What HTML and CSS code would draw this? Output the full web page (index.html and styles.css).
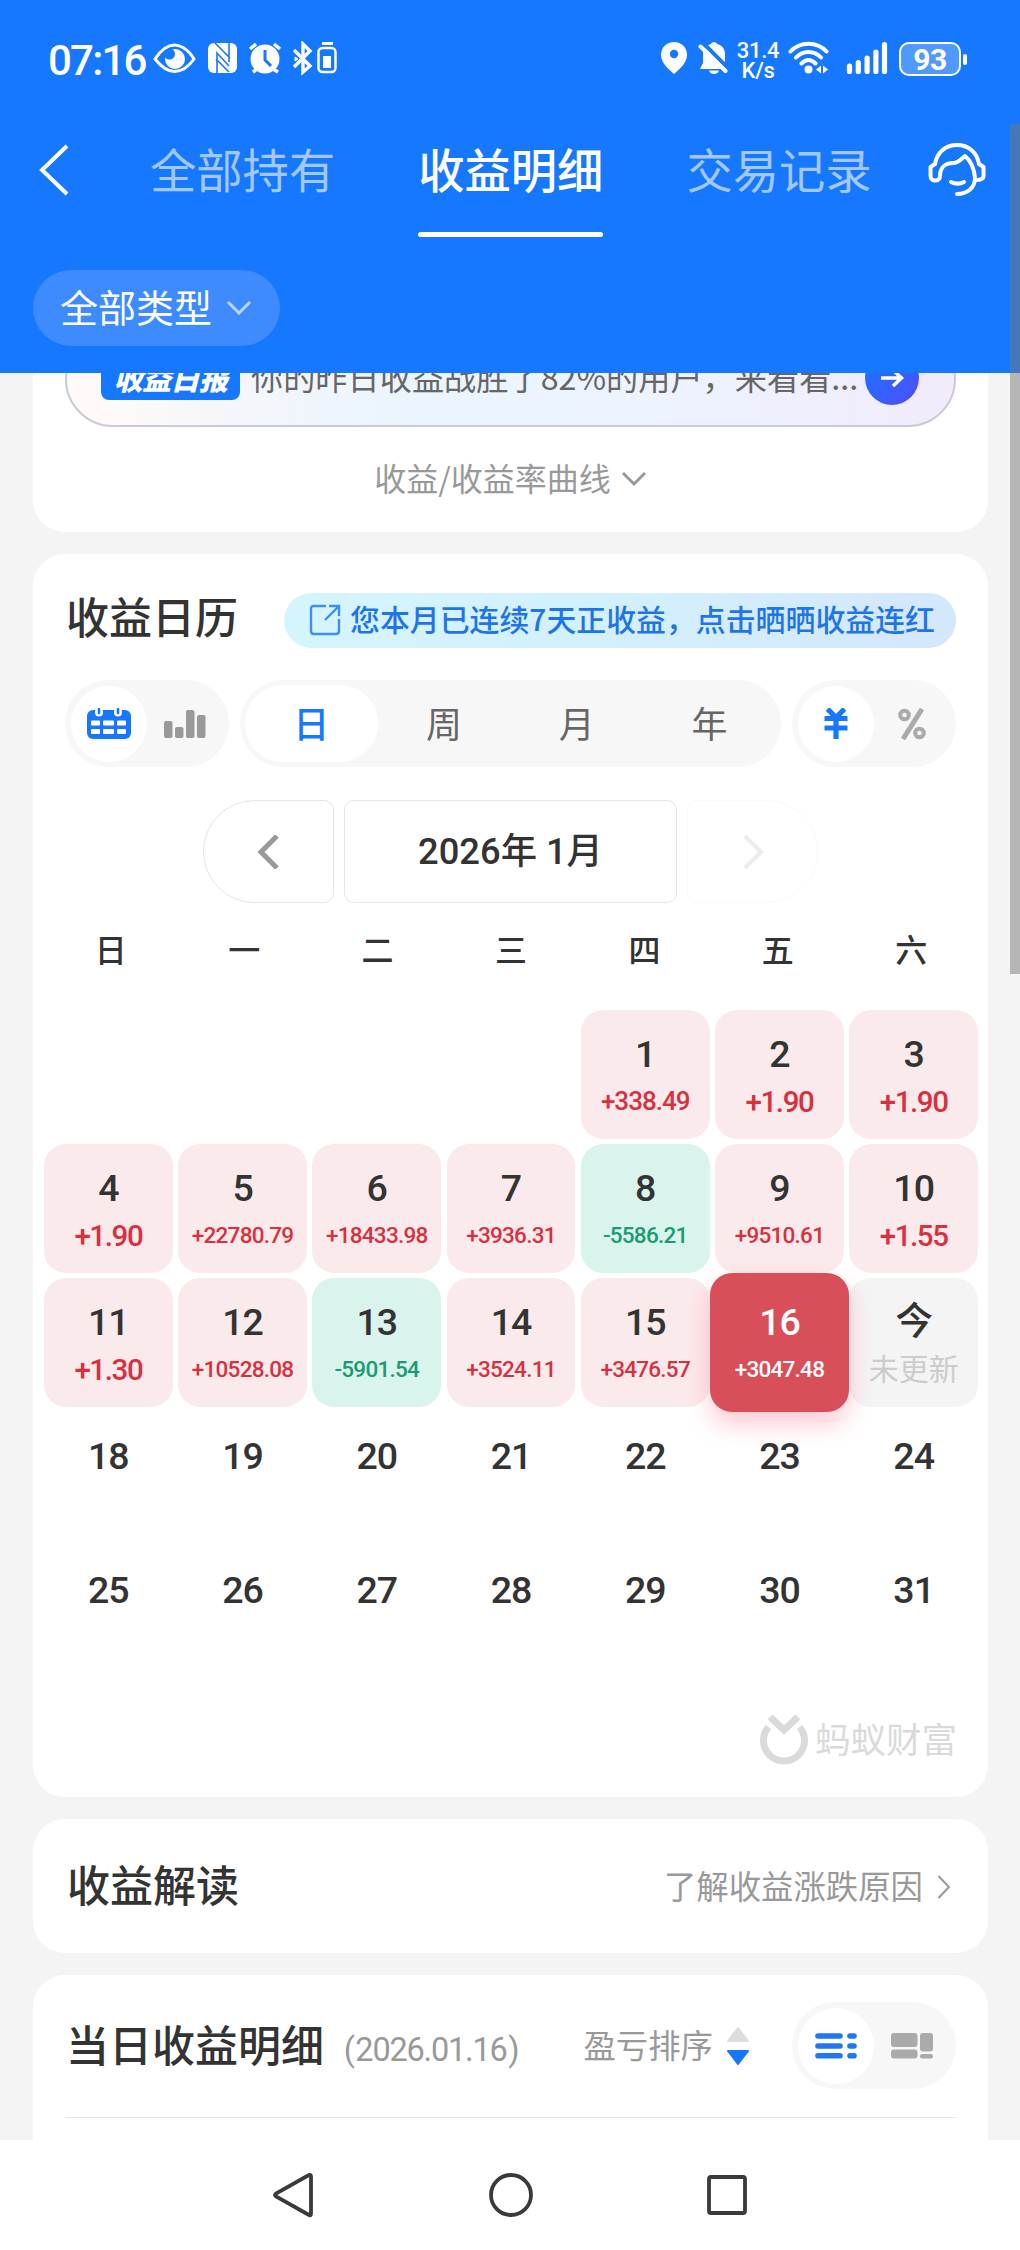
FILE: index.html
```html
<!DOCTYPE html>
<html lang="zh-CN">
<head>
<meta charset="utf-8">
<title>收益明细</title>
<link rel="stylesheet" href="styles.css">
</head>
<body>
<div class="screen">
  <header class="header">
    <div class="status">
      <span class="clock">07:16</span>
      <svg class="status-left" width="190" height="36" viewBox="0 0 190 36" fill="none" stroke="#fff">
        <path d="M2 18C10 6 18 4 21.500 4S34 6 41 18C34 28 26 30.500 21.500 30.500S10 28 2 18Z" stroke-width="3"/>
        <circle cx="22" cy="18" r="10" fill="#fff" stroke="none"/><circle cx="16.500" cy="13" r="5.500" fill="#1677ff" stroke="none"/>
        <rect x="55" y="2" width="29" height="30" rx="6" fill="#fff" stroke="none"/>
        <path d="M62 2L77 17M64 32V12L76 25M63 18L76 31M76 2V21" stroke="#1677ff" stroke-width="1.600"/>
        <circle cx="112" cy="18" r="14.500" fill="#fff" stroke="none"/>
        <path d="M97 8L103 3M121 3L127 8M104 28L100 31M120 28L125 31" stroke-width="3.500"/>
        <path d="M112 9V19L118 25" stroke="#1677ff" stroke-width="3"/>
        <path d="M141 9L157 25L150 31V3L157 10L141 26" stroke-width="3.400"/>
        <path d="M142 16l3 2l-3 2z" fill="#fff" stroke-width="1"/>
        <path d="M169 2.500H180" stroke-width="3"/><rect x="165.500" y="7" width="17" height="24" rx="4" stroke-width="2.500"/><rect x="170" y="15" width="8" height="12" fill="#fff" stroke="none"/>
      </svg>
      <svg class="status-mid" width="68" height="36" viewBox="0 0 68 36">
        <path d="M14 1C6.500 1 1 6.500 1 14C1 21 7 27 14 33C21 27 27 21 27 14C27 6.500 21.500 1 14 1Z" fill="#fff"/><circle cx="14" cy="13" r="4.200" fill="#1677ff"/>
        <path d="M43 22V13C43 7 47 4 51 3C51 .5 57 .5 57 3C62 4 65 8 65 13V24L67 28H40Z" fill="#fff"/><path d="M49 29.500H59C58 34 50 34 49 29.500Z" fill="#fff"/>
        <path d="M43 2L69 28" stroke="#1677ff" stroke-width="4"/><path d="M40.500 5.500L65.500 30" stroke="#fff" stroke-width="4" stroke-linecap="round"/>
      </svg>
      <span class="speed"><span>31.4</span><span>K/s</span></span>
      <svg class="status-right" width="100" height="36" viewBox="0 0 100 36" fill="none" stroke="#fff" stroke-linecap="round">
        <path d="M2.500 10.500C12 0 29 0 38.500 10.500M8 16.500C15 9 26 9 33 16.500M13.500 22.500C18 18 23 18 27.500 22.500" stroke-width="4"/>
        <circle cx="20.500" cy="28.500" r="4" fill="#fff" stroke="none"/><path d="M33 24.500V32.500L28 28.500ZM35 24.500V32.500L40 28.500Z" fill="#fff" stroke="none"/>
        <path d="M61.500 25V30.500M70.300 21.500V30.500M79.100 17V30.500M87.900 11V30.500M96.500 3.500V30.500" stroke-width="5.200"/>
      </svg>
      <span class="battery">93</span><i class="battery-tip"></i>
    </div>
    <nav class="tabs">
      <svg class="back" width="34" height="54" viewBox="0 0 34 54"><path d="M31 3L6 27L31 51" fill="none" stroke="#fff" stroke-width="4"/></svg>
      <span class="tab tab-first">全部持有</span>
      <span class="tab tab-active">收益明细</span>
      <span class="tab">交易记录</span>
      <svg class="service" width="58" height="56" viewBox="0 0 58 56" fill="none" stroke="#fff" stroke-width="4" stroke-linejoin="round" stroke-linecap="round">
        <path d="M7 22C9 10 18 3 29 3S49 10 51 22"/>
        <path d="M7 22L2.500 25V34C2.500 40 12 40 12 34C12 25 18 21 25 21C31 21 33 17 37 14C43 19 46 25 47 36C47 46 39 52 29 52"/>
        <path d="M51 22L55.500 25V34C55.500 37 52 38 47 38"/>
        <path d="M23 40C27 42 32 42 36 40"/>
      </svg>
    </nav>
    <div class="type-pill">全部类型<svg width="26" height="18" viewBox="0 0 26 18"><path d="M2 3L13 14L24 3" fill="none" stroke="#b9d6ff" stroke-width="3"/></svg></div>
  </header>

  <main class="content">
    <section class="card summary">
      <div class="banner">
        <span class="banner-tag">收益日报</span>
        <span class="banner-text">你的昨日收益战胜了82%的用户，来看看...</span>
        <span class="banner-go"><svg width="28" height="24" viewBox="0 0 28 24"><path d="M3 12H23M15 4L23.500 12L15 20" fill="none" stroke="#fff" stroke-width="3.500"/></svg></span>
      </div>
      <div class="curve-link">收益/收益率曲线<svg width="26" height="18" viewBox="0 0 26 18"><path d="M2 3L13 14L24 3" fill="none" stroke="#999" stroke-width="3"/></svg></div>
    </section>

    <section class="card calendar">
      <div class="calendar-head">
        <h2 class="title">收益日历</h2>
        <div class="streak">
          <svg width="32" height="32" viewBox="0 0 32 32" fill="none" stroke="#3f8df5" stroke-width="2.400"><path d="M17 2H5Q2 2 2 5V27Q2 30 5 30H27Q30 30 30 27V15M20 2H30V12M30 2L16 16"/></svg>
          <span>您本月已连续7天正收益，点击晒晒收益连红</span>
        </div>
      </div>
      <div class="controls">
        <div class="toggle">
          <span class="toggle-item on"><svg width="44" height="32" viewBox="0 0 44 32"><rect x="0" y="2" width="44" height="29" rx="6" fill="#1677ff"/><g fill="#fff"><rect x="4" y="12.500" width="9" height="5" rx="1"/><rect x="16" y="12.500" width="11" height="5" rx="1"/><rect x="30" y="12.500" width="9" height="5" rx="1"/><rect x="4" y="21" width="9" height="5" rx="1"/><rect x="16" y="21" width="11" height="5" rx="1"/><rect x="30" y="21" width="9" height="5" rx="1"/><rect x="8" y="0" width="8" height="8.500" rx="4"/><rect x="27" y="0" width="8" height="8.500" rx="4"/></g><path d="M12 1V5M31 1V5" stroke="#1677ff" stroke-width="2.500" stroke-linecap="round"/></svg></span>
          <span class="toggle-item"><svg width="42" height="28" viewBox="0 0 42 28" fill="#999"><rect x="0" y="11" width="8.500" height="17" rx="2"/><rect x="11" y="17" width="8.500" height="11" rx="2"/><rect x="22" y="0" width="8.500" height="28" rx="2"/><rect x="33" y="5" width="8.500" height="23" rx="2"/></svg></span>
        </div>
        <div class="period"><span class="on">日</span><span>周</span><span>月</span><span>年</span></div>
        <div class="toggle">
          <span class="toggle-item on"><svg width="24" height="32" viewBox="0 0 24 32" fill="none" stroke="#1677ff" stroke-width="5.200"><path d="M3.500 1L12 9.500L20.500 1M12 8V31M.5 10.500H23.500M.5 20H23.500"/></svg></span>
          <span class="toggle-item"><svg width="28" height="32" viewBox="0 0 28 32" fill="none" stroke="#aaa"><circle cx="6.500" cy="7" r="4.300" stroke-width="4"/><circle cx="21.500" cy="25" r="4.300" stroke-width="4"/><path d="M24 1L5 31" stroke-width="5"/></svg></span>
        </div>
      </div>
      <div class="month-nav">
        <span class="month-btn prev"><svg width="22" height="34" viewBox="0 0 22 34"><path d="M20 1L4 17L20 33" fill="none" stroke="#999" stroke-width="5"/></svg></span>
        <span class="month">2026年 1月</span>
        <span class="month-btn next"><svg width="22" height="34" viewBox="0 0 22 34"><path d="M2 1L18 17L2 33" fill="none" stroke="#ececec" stroke-width="4"/></svg></span>
      </div>
      <div class="weekdays"><span>日</span><span>一</span><span>二</span><span>三</span><span>四</span><span>五</span><span>六</span></div>
      <div class="days">
        <div class="day up first"><b>1</b><span class="mid">+338.49</span></div>
        <div class="day up"><b>2</b><span class="big">+1.90</span></div>
        <div class="day up"><b>3</b><span class="big">+1.90</span></div>
        <div class="day up"><b>4</b><span class="big">+1.90</span></div>
        <div class="day up"><b>5</b><span>+22780.79</span></div>
        <div class="day up"><b>6</b><span>+18433.98</span></div>
        <div class="day up"><b>7</b><span>+3936.31</span></div>
        <div class="day down"><b>8</b><span>-5586.21</span></div>
        <div class="day up"><b>9</b><span>+9510.61</span></div>
        <div class="day up"><b>10</b><span class="big">+1.55</span></div>
        <div class="day up"><b>11</b><span class="big">+1.30</span></div>
        <div class="day up"><b>12</b><span>+10528.08</span></div>
        <div class="day down"><b>13</b><span>-5901.54</span></div>
        <div class="day up"><b>14</b><span>+3524.11</span></div>
        <div class="day up"><b>15</b><span>+3476.57</span></div>
        <div class="day selected"><b>16</b><span>+3047.48</span></div>
        <div class="day today"><b>今</b><span>未更新</span></div>
        <div class="day"><b>18</b></div><div class="day"><b>19</b></div><div class="day"><b>20</b></div><div class="day"><b>21</b></div><div class="day"><b>22</b></div><div class="day"><b>23</b></div><div class="day"><b>24</b></div>
        <div class="day"><b>25</b></div><div class="day"><b>26</b></div><div class="day"><b>27</b></div><div class="day"><b>28</b></div><div class="day"><b>29</b></div><div class="day"><b>30</b></div><div class="day"><b>31</b></div>
      </div>
      <div class="brand">
        <svg width="48" height="50" viewBox="0 0 48 50" fill="none" stroke="#dadada"><path d="M8.500 12A20.500 20.500 0 1 0 39.500 12" stroke-width="7"/><path d="M10 2L24 15L38 2" stroke-width="7"/></svg>
        <span>蚂蚁财富</span>
      </div>
    </section>

    <section class="card insight">
      <h2 class="title">收益解读</h2>
      <span class="more">了解收益涨跌原因<svg width="14" height="24" viewBox="0 0 14 24"><path d="M1.500 1L12 12L1.500 23" fill="none" stroke="#999" stroke-width="2"/></svg></span>
    </section>

    <section class="card detail">
      <div class="detail-head">
        <h2 class="title">当日收益明细</h2>
        <span class="date"><i>(</i>2026.01.16<i>)</i></span>
        <span class="sort">盈亏排序</span>
        <svg class="sort-icon" width="22" height="38" viewBox="0 0 22 38"><path d="M11 1L21 14H1Z" fill="#ddd" stroke="#ddd" stroke-width="2" stroke-linejoin="round"/><path d="M11 37L21 24H1Z" fill="#1677ff" stroke="#1677ff" stroke-width="2" stroke-linejoin="round"/></svg>
        <div class="toggle">
          <span class="toggle-item on"><svg width="42" height="26" viewBox="0 0 42 26" stroke="#1f78f0" stroke-width="5.600" stroke-linecap="round"><path d="M3 3H25M35 3H39M3 13H25M35 13H39M3 22.800H25M35 22.800H39"/></svg></span>
          <span class="toggle-item"><svg width="42" height="26" viewBox="0 0 42 26" fill="#aaa"><rect x="0" y="0" width="26.500" height="14" rx="3"/><rect x="29" y="0" width="13" height="18.500" rx="3"/><rect x="0" y="16.500" width="26.500" height="9" rx="3"/><rect x="29" y="21" width="13" height="4.500" rx="2.200"/></svg></span>
        </div>
      </div>
    </section>
  </main>

  <footer class="system-nav">
    <svg width="44" height="48" viewBox="0 0 44 48"><path d="M38.500 4Q40 4 40 5.500V42.500Q40 45 38 44L5 25.500Q3 24 5 22.500L37 4.500Z" fill="none" stroke="#3a3a3a" stroke-width="3.800"/></svg>
    <svg width="46" height="46" viewBox="0 0 46 46"><circle cx="23" cy="23" r="20" fill="none" stroke="#3a3a3a" stroke-width="3.800"/></svg>
    <svg width="40" height="40" viewBox="0 0 40 40"><rect x="2" y="2" width="36" height="36" rx="2" fill="none" stroke="#3a3a3a" stroke-width="3.800"/></svg>
  </footer>
  <i class="scrollbar"></i>
</div>
</body>
</html>
```
FILE: styles.css
```css
* { box-sizing: border-box; }
body { margin: 0; background: #f4f4f4; color: #333; font-family: "Noto Sans CJK SC", sans-serif; }
svg { display: block; flex: none; }
i { font-style: normal; }
.screen { position: relative; display: flex; flex-direction: column; width: 1020px; height: 2250px; overflow: hidden; background: #f4f4f4; }

.header { flex: none; height: 373px; background: #1677ff; color: #fff; }
.status { display: flex; align-items: center; height: 118px; padding: 0 53px 0 48px; }
.clock { width: 104px; font: 500 42px/50px Roboto, sans-serif; letter-spacing: -1.8px; padding-top: 3px; }
.status-left { margin-left: 1px; }
.status-mid { margin-left: auto; }
.speed { display: flex; flex-direction: column; align-items: center; width: 46px; margin: 3px 0 0 7px; font: 500 22px/20px Roboto, sans-serif; letter-spacing: -.3px; }
.status-right { margin-left: 7px; }
.battery { width: 62px; height: 34px; margin-left: 11px; border: 2px solid #fff; border-radius: 10px; background: rgba(255,255,255,.25); text-align: center; font: 700 30px/31px Roboto, sans-serif; letter-spacing: -.5px; }
.battery-tip { width: 4px; height: 11px; margin-left: 2px; border-radius: 2px; background: #fff; }

.tabs { display: flex; align-items: center; height: 104px; padding: 0 34px 0 36px; }
.tab { margin: 0 83px 4px 0; font-size: 46.300px; line-height: 60px; color: #a2c8ff; white-space: nowrap; }
.tab-first { margin-left: 80px; }
.tab-active { position: relative; color: #fff; font-weight: 500; }
.tab-active::after { content: ""; position: absolute; left: 0; right: 0; bottom: -39px; height: 5px; border-radius: 3px; background: #fff; }
.tab:nth-of-type(3) { margin-right: 0; }
.service { margin-left: auto; }
.type-pill { display: flex; align-items: center; gap: 14px; width: 247px; height: 76px; margin: 48px 0 0 33px; padding: 0 0 4px 27px; border-radius: 38px; background: #3d8bff; font-size: 38px; line-height: 56px; }
.type-pill svg { margin-top: 3px; }

.content { display: flex; flex-direction: column; gap: 22px; flex: 1; min-height: 0; padding: 0 32px 0 33px; overflow: hidden; }
.card { flex: none; background: #fff; border-radius: 32px; }

.summary { display: flex; flex-direction: column; justify-content: flex-end; height: 159px; padding: 0 32px; border-radius: 0 0 32px 32px; }
.banner { display: flex; flex: none; align-items: center; height: 96px; padding: 0 35px 0 34px; border: 2px solid #c9c9d9; border-radius: 48px; background: linear-gradient(90deg, #fffaf7 3%, #f5f6fa 18%, #eaf5ff 40%, #edf3ff 65%, #f1ebfb); }
.banner-tag { width: 139px; height: 42px; border-radius: 8px; background: #1677ff; color: #fff; text-align: center; font-size: 29px; font-weight: 900; font-style: italic; line-height: 38px; letter-spacing: -.5px; }
.banner-text { flex: 1; margin: 0 0 6px 11px; font-size: 32.200px; line-height: 44px; color: #666; white-space: nowrap; }
.banner-go { display: flex; align-items: center; justify-content: center; width: 54px; height: 54px; margin-bottom: 3px; border-radius: 50%; background: linear-gradient(135deg, #1677ff, #514cff); }
.curve-link { flex: none; display: flex; align-items: center; justify-content: center; gap: 10px; height: 105px; padding-bottom: 5px; font-size: 32px; color: #999; }
.curve-link svg { margin-top: 4px; }

.title { margin: 0; font-size: 43px; font-weight: 500; line-height: 60px; white-space: nowrap; }
.calendar { height: 1243px; padding: 31px 0 0; }
.calendar-head { display: flex; align-items: center; justify-content: space-between; height: 70px; padding: 0 32px 0 33px; }
.calendar-head .title { margin-bottom: 11px; }
.streak { display: flex; align-items: center; gap: 9px; width: 672px; height: 55px; padding-left: 25px; border-radius: 28px; background: linear-gradient(90deg, #d5f5fd, #d3f0fd 45%, #d4e7fd); font-size: 29.900px; font-weight: 500; line-height: 44px; color: #1f75e8; white-space: nowrap; }
.streak span { margin-bottom: 4px; }
.controls { display: flex; gap: 11px; height: 87px; margin: 25px 32px 0; }
.toggle { display: flex; flex: none; align-items: center; width: 164px; height: 87px; padding: 0 6px; border-radius: 44px; background: #f7f7f7; }
.toggle-item { display: flex; align-items: center; justify-content: center; width: 76px; height: 76px; border-radius: 50%; }
.toggle-item.on { background: #fff; }
.period { display: grid; grid-template-columns: repeat(4, 1fr); flex: 1; padding: 5px; border-radius: 44px; background: #f7f7f7; font-size: 36px; line-height: 74px; text-align: center; color: #666; }
.period .on { border-radius: 38px; background: #fff; color: #1677ff; font-weight: 500; }
.month-nav { display: flex; gap: 10px; justify-content: center; height: 103px; margin-top: 33px; }
.month-btn, .month { display: flex; align-items: center; justify-content: center; width: 131px; border: 1px solid #e5e5e5; border-radius: 10px; }
.month-btn.prev { padding-right: 2px; border-radius: 52px 10px 10px 52px; }
.month-btn.next { padding-left: 2px; border-color: #fafafa; border-radius: 10px 52px 52px 10px; }
.month { width: 333px; font: 500 36.300px/50px Roboto, "Noto Sans CJK SC", sans-serif; }
.weekdays { display: grid; grid-template-columns: repeat(7, 1fr); height: 70px; margin: 11px 10px 0 11px; text-align: center; font-size: 32px; font-weight: 500; line-height: 69px; }
.days { display: grid; grid-template-columns: repeat(7, 1fr); grid-auto-rows: 128.500px; gap: 5.600px; margin: 26px 10px 0 11px; }
.day { display: flex; flex-direction: column; align-items: center; padding-top: 22px; border-radius: 22px; font-family: Roboto, "Noto Sans CJK SC", sans-serif; }
.first { grid-column: 5; }
.day b { height: 44px; font-size: 37.500px; font-weight: 500; line-height: 45px; letter-spacing: -1px; }
.day span { margin-top: 9px; height: 34px; font-size: 22.500px; font-weight: 500; line-height: 33px; letter-spacing: -.75px; }
.day .mid { font-size: 26px; line-height: 32px; letter-spacing: -1px; }
.day .big { font-size: 29.500px; line-height: 34px; letter-spacing: -1.4px; }
.up { background: #fbeaec; }
.up span { color: #d8303f; }
.down { background: #d8f4ec; }
.down span { color: #1c9a72; }
.selected { z-index: 1; margin: -5.500px; padding-top: 27.500px; background: #d84f59; color: #fff; box-shadow: 0 12px 24px rgba(245,80,100,.3); }
.today { background: #f4f4f4; }
.today b { line-height: 43px; }
.today span { font-size: 30px; font-weight: 400; color: #ccc; letter-spacing: 0; }
.brand { display: flex; align-items: center; justify-content: flex-end; gap: 7px; height: 50px; margin: 40px 31px 0 0; color: #dadada; font-size: 35.500px; line-height: 50px; }
.brand span { margin-bottom: 3px; }

.insight { display: flex; align-items: center; justify-content: space-between; height: 134px; padding: 0 37px 2px 34px; }
.insight .title { margin-bottom: 4px; }
.more { display: flex; align-items: center; gap: 14px; font-size: 32.400px; line-height: 46px; color: #999; }
.more svg { margin-top: 4px; }
.detail { height: 200px; padding: 27px 32px 0; }
.detail-head { display: flex; align-items: center; height: 116px; padding: 0 0 28px 1px; border-bottom: 1px solid #e8e8e8; }
.detail-head .title { margin-bottom: 5px; }
.date { display: flex; align-items: center; width: 178px; margin: 8px 0 0 18px; font: 400 32.500px/44px Roboto, sans-serif; letter-spacing: -1.2px; color: #999; }
.date i { width: 14px; text-align: center; }
.sort { margin: 0 0 3px auto; font-size: 32.400px; line-height: 46px; color: #999; }
.sort-icon { margin: 0 43px 0 14px; }

.system-nav { z-index: 1; display: flex; align-items: center; justify-content: center; gap: 173px; flex: none; height: 110px; padding-right: 3px; background: #fff; }
.scrollbar { position: absolute; top: 124px; right: 0; width: 10px; height: 850px; background: rgba(120,120,120,.5); }
```
